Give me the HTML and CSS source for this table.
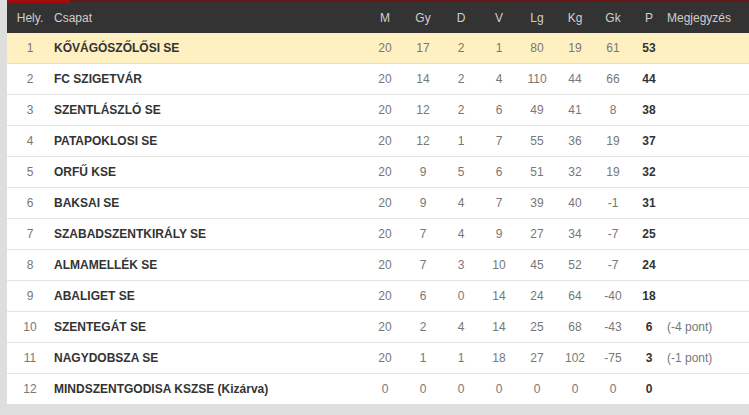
FILE: index.html
```html
<!DOCTYPE html>
<html lang="hu">
<head>
<meta charset="utf-8">
<title>Tabella</title>
<link rel="stylesheet" href="styles.css">
</head>
<body>
<div class="wrap">
  <div class="tabs"><span class="tab-active"></span></div>
  <table class="standings">
    <colgroup>
      <col class="c-pos"><col class="c-team">
      <col class="c-num"><col class="c-num"><col class="c-num"><col class="c-num">
      <col class="c-num"><col class="c-num"><col class="c-num"><col class="c-pts"><col class="c-note">
    </colgroup>
    <thead>
      <tr>
        <th class="pos">Hely.</th><th class="team">Csapat</th>
        <th>M</th><th>Gy</th><th>D</th><th>V</th><th>Lg</th><th>Kg</th><th>Gk</th><th>P</th>
        <th class="note">Megjegyzés</th>
      </tr>
    </thead>
    <tbody>
      <tr class="leader"><td class="pos">1</td><td class="team">KŐVÁGÓSZŐLŐSI SE</td><td>20</td><td>17</td><td>2</td><td>1</td><td>80</td><td>19</td><td>61</td><td class="pts">53</td><td class="note"></td></tr>
      <tr><td class="pos">2</td><td class="team">FC SZIGETVÁR</td><td>20</td><td>14</td><td>2</td><td>4</td><td>110</td><td>44</td><td>66</td><td class="pts">44</td><td class="note"></td></tr>
      <tr><td class="pos">3</td><td class="team">SZENTLÁSZLÓ SE</td><td>20</td><td>12</td><td>2</td><td>6</td><td>49</td><td>41</td><td>8</td><td class="pts">38</td><td class="note"></td></tr>
      <tr><td class="pos">4</td><td class="team">PATAPOKLOSI SE</td><td>20</td><td>12</td><td>1</td><td>7</td><td>55</td><td>36</td><td>19</td><td class="pts">37</td><td class="note"></td></tr>
      <tr><td class="pos">5</td><td class="team">ORFŰ KSE</td><td>20</td><td>9</td><td>5</td><td>6</td><td>51</td><td>32</td><td>19</td><td class="pts">32</td><td class="note"></td></tr>
      <tr><td class="pos">6</td><td class="team">BAKSAI SE</td><td>20</td><td>9</td><td>4</td><td>7</td><td>39</td><td>40</td><td>-1</td><td class="pts">31</td><td class="note"></td></tr>
      <tr><td class="pos">7</td><td class="team">SZABADSZENTKIRÁLY SE</td><td>20</td><td>7</td><td>4</td><td>9</td><td>27</td><td>34</td><td>-7</td><td class="pts">25</td><td class="note"></td></tr>
      <tr><td class="pos">8</td><td class="team">ALMAMELLÉK SE</td><td>20</td><td>7</td><td>3</td><td>10</td><td>45</td><td>52</td><td>-7</td><td class="pts">24</td><td class="note"></td></tr>
      <tr><td class="pos">9</td><td class="team">ABALIGET SE</td><td>20</td><td>6</td><td>0</td><td>14</td><td>24</td><td>64</td><td>-40</td><td class="pts">18</td><td class="note"></td></tr>
      <tr><td class="pos">10</td><td class="team">SZENTEGÁT SE</td><td>20</td><td>2</td><td>4</td><td>14</td><td>25</td><td>68</td><td>-43</td><td class="pts">6</td><td class="note">(-4 pont)</td></tr>
      <tr><td class="pos">11</td><td class="team">NAGYDOBSZA SE</td><td>20</td><td>1</td><td>1</td><td>18</td><td>27</td><td>102</td><td>-75</td><td class="pts">3</td><td class="note">(-1 pont)</td></tr>
      <tr class="last"><td class="pos">12</td><td class="team">MINDSZENTGODISA KSZSE (Kizárva)</td><td>0</td><td>0</td><td>0</td><td>0</td><td>0</td><td>0</td><td>0</td><td class="pts">0</td><td class="note"></td></tr>
    </tbody>
  </table>
</div>
</body>
</html>
```
FILE: styles.css
```css
html, body {
  margin: 0;
  padding: 0;
  background: #dedede;
  font-family: "Liberation Sans", Arial, sans-serif;
  font-size: 12px;
}

.wrap {
  padding-left: 7px;
  width: 742px;
}

.tabs {
  height: 3px;
  background: #333;
  border-top: 2px solid #6a1515;
  box-sizing: border-box;
  position: relative;
}

.tab-active {
  position: absolute;
  left: 0;
  top: -2px;
  width: 63px;
  height: 3px;
  background: #a10d0d;
}

.standings {
  width: 742px;
  border-collapse: collapse;
  table-layout: fixed;
  background: #fff;
}

.c-pos { width: 46px; }
.c-team { width: 313px; }
.c-num { width: 38px; }
.c-pts { width: 34px; }
.c-note { width: 83px; }

.standings th {
  background: #333;
  color: #cfcfcf;
  font-weight: normal;
  height: 30px;
  padding: 0;
  text-align: center;
  vertical-align: middle;
}

.standings td {
  height: 30px;
  padding: 0;
  text-align: center;
  vertical-align: middle;
  color: #777;
  border-bottom: 1px solid #e4e4e4;
}

.standings tr.last td {
  border-bottom: none;
}

.standings .team {
  text-align: left;
  padding-left: 1px;
}

.standings td.team {
  color: #333;
  font-weight: bold;
}

.standings td.pts {
  color: #333;
  font-weight: bold;
}

.standings .note {
  text-align: left;
  padding-left: 1px;
}

.standings tr.leader td {
  background: #fff0c2;
  border-bottom-color: #ecdfb8;
}
```
